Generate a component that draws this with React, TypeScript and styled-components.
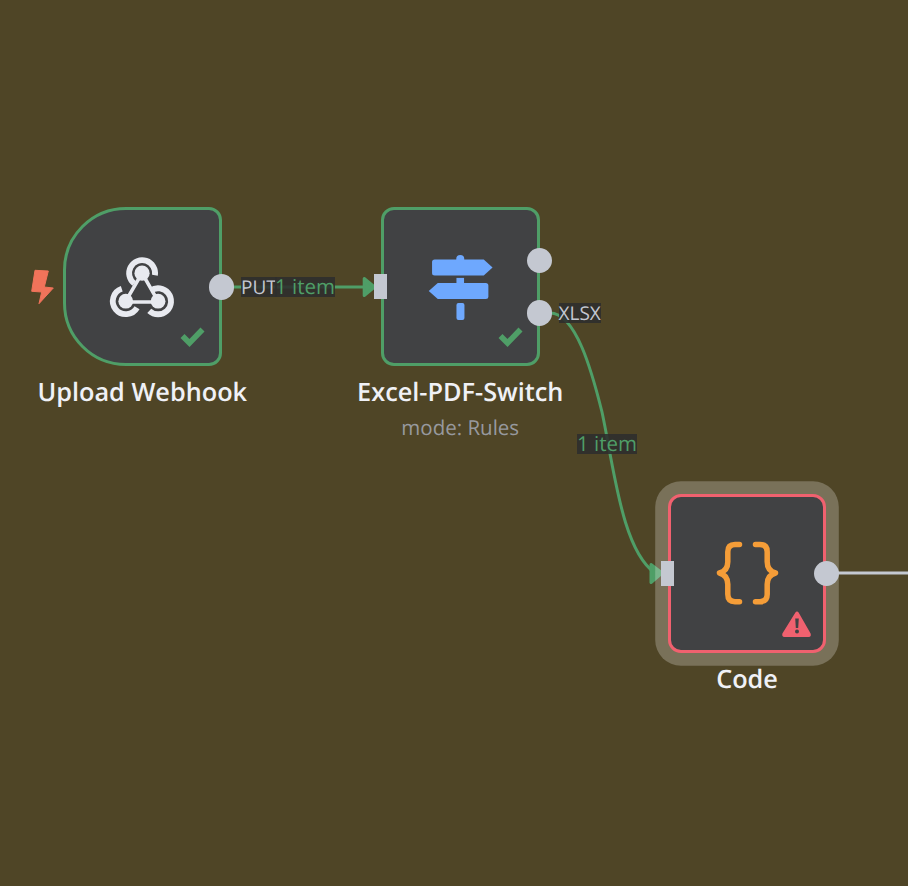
import React from "react";
import styled, { createGlobalStyle } from "styled-components";

const GREEN = "#4f9e67";
const HANDLE = "#c4c8d1";
const FONT = `"Open Sans", "Noto Sans", sans-serif`;

const Global = createGlobalStyle`
  html, body { margin: 0; padding: 0; background: #4f4526; }
  body { font-family: ${FONT}; overflow: hidden; text-rendering: geometricPrecision; }
`;

const Canvas = styled.main`
  position: relative;
  width: 908px;
  height: 886px;
  overflow: hidden;
  background: #4f4526;
`;

const EdgeLayer = styled.svg`
  position: absolute;
  inset: 0;
  width: 908px;
  height: 886px;
`;

const Node = styled.section<{ $x: number; $y: number; $border: string; $trigger?: boolean; $halo?: boolean }>`
  position: absolute;
  left: ${(p) => p.$x}px;
  top: ${(p) => p.$y}px;
  width: 158.5px;
  height: 158.5px;
  box-sizing: border-box;
  display: flex;
  align-items: center;
  justify-content: center;
  background: #414244;
  border: 3px solid ${(p) => p.$border};
  border-radius: ${(p) => (p.$trigger ? "63px 13px 13px 63px" : "13px")};
  box-shadow: ${(p) => (p.$halo ? "0 0 0 12.8px rgba(255, 255, 255, 0.24)" : "none")};
`;

const Status = styled.svg`
  position: absolute;
  right: 10px;
  bottom: 12px;
  width: 32px;
  height: 28px;
`;

const Caption = styled.div`
  position: absolute;
  left: 50%;
  top: 100%;
  transform: translateX(-50%);
  display: flex;
  flex-direction: column;
  align-items: center;
  white-space: nowrap;
`;

const Title = styled.div`
  margin-top: 13px;
  font-size: 25.3px;
  line-height: 32px;
  font-weight: 600;
  color: #f0f1f6;
`;

const Subtitle = styled.div`
  margin-top: 7px;
  font-size: 20.5px;
  line-height: 26px;
  font-weight: 400;
  color: #97999e;
`;

const OutDot = styled.i<{ $y: number }>`
  position: absolute;
  right: -15.7px;
  top: ${(p) => p.$y}px;
  width: 25.4px;
  height: 25.4px;
  border-radius: 50%;
  background: ${HANDLE};
`;

const InBar = styled.i`
  position: absolute;
  left: -9.8px;
  top: 63.6px;
  width: 13px;
  height: 25.4px;
  background: ${HANDLE};
`;

const Bolt = styled.svg`
  position: absolute;
  left: 30px;
  top: 268px;
  width: 26px;
  height: 38px;
`;

const EdgeLabel = styled.span<{ $x: number; $y: number; $green?: boolean }>`
  position: absolute;
  left: ${(p) => p.$x}px;
  top: ${(p) => p.$y}px;
  height: 20px;
  font-size: ${(p) => (p.$green ? "20.5px" : "19px")};
  line-height: 21px;
  font-weight: 400;
  white-space: nowrap;
  color: ${(p) => (p.$green ? GREEN : "#c4c8d1")};
  background: rgba(45, 46, 46, 0.88);
`;

const WebhookIcon = () => (
  <svg width="80" height="80" viewBox="102.25 246.5 80 80" fill="none" strokeLinecap="round">
    <path d="M142.3 272.7 L158.3 300.7 M142.3 272.7 L126 300.7 M126 301.5 H158.3" stroke="#e8eaf0" strokeWidth="3.6" />
    <circle cx="142.3" cy="272.7" r="7.6" fill="#e8eaf0" />
    <circle cx="126" cy="300.7" r="7.4" fill="#e8eaf0" />
    <circle cx="158.3" cy="300.7" r="7.4" fill="#e8eaf0" />
    <g stroke="#e8eaf0" strokeWidth="5.8" strokeLinecap="butt">
      <path d="M155.2 274.7 A13 13 0 1 0 134.5 283" />
      <path d="M122 288.3 A13 13 0 1 0 137.3 307.2" />
      <path d="M151 290 A13 13 0 1 1 149.5 310.3" />
    </g>
  </svg>
);

const SwitchIcon = () => (
  <svg width="80" height="80" viewBox="420.25 246.6 80 80" fill="#6ea8fe">
    <rect x="456.5" y="254.7" width="8" height="10" rx="4" />
    <rect x="456.7" y="277.5" width="7.6" height="8" />
    <rect x="456.7" y="302.5" width="8" height="17" rx="2" />
    <path d="M435 259 H484 L492.8 267 L484 275 H435 Q432.3 275 432.3 272.5 V261.5 Q432.3 259 435 259 Z" />
    <path d="M486 282.7 H438 L429 290.7 L438 298.7 H486 Q488.6 298.7 488.6 296.2 V285.2 Q488.6 282.7 486 282.7 Z" />
  </svg>
);

const CodeIcon = () => (
  <svg width="80" height="80" viewBox="707 533.3 80 80" fill="none" stroke="#f59d38" strokeWidth="5.5" strokeLinecap="round" strokeLinejoin="round">
    <path d="M739.5 544.7 H735 Q727.8 544.7 727.8 552 V562 Q727.8 571 719.5 573.3 Q727.8 575.6 727.8 584.6 V594.6 Q727.8 602 735 602 H739.5" />
    <path d="M755.5 544.7 H760 Q767.2 544.7 767.2 552 V562 Q767.2 571 775.5 573.3 Q767.2 575.6 767.2 584.6 V594.6 Q767.2 602 760 602 H755.5" />
  </svg>
);

const Check = () => (
  <Status viewBox="0 0 32 28" fill="none">
    <path d="M5.5 13 L12.5 20 L25.5 6.5" stroke={GREEN} strokeWidth="5.6" />
  </Status>
);

const Warning = () => (
  <Status viewBox="0 0 32 28">
    <path d="M16 1.5 Q17 1.5 17.6 2.6 L29.6 23.4 Q30.6 26.8 27.6 27 H3.4 Q0.6 26.8 1.4 23.4 L14.4 2.6 Q15 1.5 16 1.5 Z" fill="#f0616f" />
    <path d="M14.2 8.6 H17.8 L17.2 18 H14.8 Z" fill="#414244" />
    <circle cx="16" cy="21.5" r="2" fill="#414244" />
  </Status>
);

export default function App() {
  return (
    <Canvas>
      <Global />
      <EdgeLayer viewBox="0 0 908 886" fill="none">
        <path d="M232 287 H368" stroke={GREEN} strokeWidth="3" />
        <path d="M364.2 278.5 L374.5 287 L364.2 295.5 Z" fill={GREEN} stroke={GREEN} strokeWidth="3" strokeLinejoin="round" />
        <path
          d="M550 313 C 576 313, 592 372, 602 412 C 614 468, 622 550, 655 573"
          stroke={GREEN}
          strokeWidth="3"
        />
        <path d="M651 564.5 L662 573 L651 582.5 Z" fill={GREEN} stroke={GREEN} strokeWidth="3" strokeLinejoin="round" />
        <path d="M830 573 H908" stroke={HANDLE} strokeWidth="3" />
      </EdgeLayer>

      <Bolt viewBox="30 268 26 38">
        <path d="M35 270.3 L48.3 271 L44.3 287 L53.3 288 L39 303.7 L41.7 292 L31.7 291.3 Z" fill="#f0735a" stroke="#f0735a" strokeLinejoin="round" />
      </Bolt>

      <Node $x={63} $y={207.4} $border={GREEN} $trigger>
        <WebhookIcon />
        <Check />
        <OutDot $y={63.9} />
        <Caption>
          <Title>Upload Webhook</Title>
        </Caption>
      </Node>

      <Node $x={381} $y={207.4} $border={GREEN}>
        <SwitchIcon />
        <Check />
        <InBar />
        <OutDot $y={37.4} />
        <OutDot $y={89.9} />
        <Caption>
          <Title>Excel-PDF-Switch</Title>
          <Subtitle>mode: Rules</Subtitle>
        </Caption>
      </Node>

      <Node $x={667.8} $y={494} $border="#f0616f" $halo>
        <CodeIcon />
        <Warning />
        <InBar />
        <OutDot $y={63.9} />
        <Caption>
          <Title>Code</Title>
        </Caption>
      </Node>

      <EdgeLabel $x={241} $y={277}>PUT</EdgeLabel>
      <EdgeLabel $x={275} $y={277} $green>1 item</EdgeLabel>
      <EdgeLabel $x={558.5} $y={303}>XLSX</EdgeLabel>
      <EdgeLabel $x={577} $y={433.5} $green>1 item</EdgeLabel>
    </Canvas>
  );
}
